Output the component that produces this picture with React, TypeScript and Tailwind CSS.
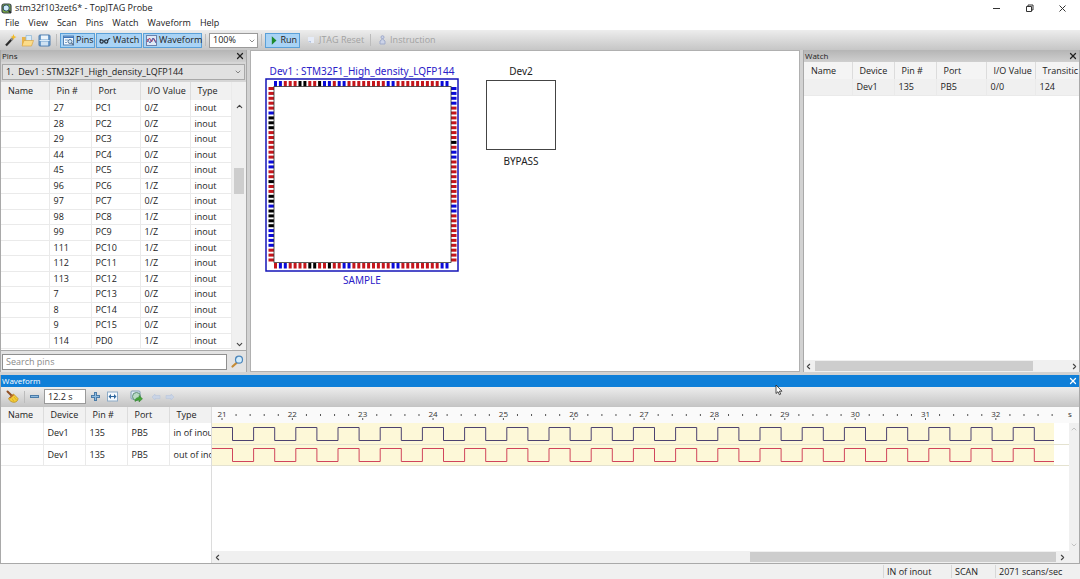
import React from 'react';
import { ChevronDown, ChevronLeft, ChevronRight, ChevronUp, X } from 'lucide-react';

interface Pin {
  pin: string;
  port: string;
  value: string;
}

const pins: Pin[] = [
  { pin: '27', port: 'PC1', value: '0/Z' },
  { pin: '28', port: 'PC2', value: '0/Z' },
  { pin: '29', port: 'PC3', value: '0/Z' },
  { pin: '44', port: 'PC4', value: '0/Z' },
  { pin: '45', port: 'PC5', value: '0/Z' },
  { pin: '96', port: 'PC6', value: '1/Z' },
  { pin: '97', port: 'PC7', value: '0/Z' },
  { pin: '98', port: 'PC8', value: '1/Z' },
  { pin: '99', port: 'PC9', value: '1/Z' },
  { pin: '111', port: 'PC10', value: '1/Z' },
  { pin: '112', port: 'PC11', value: '1/Z' },
  { pin: '113', port: 'PC12', value: '1/Z' },
  { pin: '7', port: 'PC13', value: '0/Z' },
  { pin: '8', port: 'PC14', value: '0/Z' },
  { pin: '9', port: 'PC15', value: '0/Z' },
  { pin: '114', port: 'PD0', value: '1/Z' },
];

// One letter per package pin: r = high, b = low, k = power or unused
const chipPins = {
  top: 'bbrrrkkrrkbbrbbrrrrrrrrbbrrrrrrrrrbb',
  right: 'bbbbrrrrrrrkrbbrrrrrrrrrbbrrrrrrrrrr',
  bottom: 'rbbrrrrkkrrkrrbbrrrrrrrrbbrrrrrrrrbb',
  left: 'rrrrrbkkkrrrrrrbbrrkrrkkbkkkkbbbbrrr',
};

const pinColors: Record<string, string> = { r: '#c4161c', b: '#0a0ad8', k: '#000000' };

function Separator() {
  return <span className="h-3 w-px shrink-0 bg-[#bcbcbc]" />;
}

function PanelTitle({ title, active = false }: { title: string; active?: boolean }) {
  return (
    <div
      className={`flex h-3 shrink-0 items-center justify-between px-px text-[8px] leading-3 ${
        active ? 'bg-[#0f7fd8] text-white' : 'bg-linear-to-b from-[#b5b5b5] to-[#cfcfcf] text-[#222]'
      }`}
    >
      <h2>{title}</h2>
      <button aria-label={`Close ${title}`}>
        <X size={10} strokeWidth={3} />
      </button>
    </div>
  );
}

function HeaderCell({ children }: { children?: React.ReactNode }) {
  return <th className="overflow-hidden border-r border-[#dcdcdc] pl-[7px] text-left font-normal last:border-r-0">{children}</th>;
}

function Cell({ children }: { children?: React.ReactNode }) {
  return <td className="overflow-hidden border-r border-b border-[#eaeaea] pl-1 last:border-r-0">{children}</td>;
}

function AppIcon() {
  return (
    <svg width="11" height="11" viewBox="0 0 11 11">
      <rect x="1" y="1" width="9" height="9" rx="2" fill="#7fae3c" stroke="#3b444c" strokeWidth="1.2" />
      <circle cx="5.2" cy="5" r="3.1" fill="#cfeafa" stroke="#2d4f66" />
      <path d="M7.5 7.5l2.5 2.5" stroke="#20262c" strokeWidth="1.6" />
    </svg>
  );
}

function WandIcon() {
  return (
    <svg width="13" height="13" viewBox="0 0 13 13">
      <path d="M2 11.5L8 5" stroke="#2b2b2b" strokeWidth="2.2" />
      <path d="M7 6l2.5-2.5" stroke="#8d8d8d" strokeWidth="2.2" />
      <path d="M9.5 0l.8 2.2 2.2.8-2.2.9-.8 2.1-.9-2.1L6.5 3l2.1-.8z" fill="#f2bb27" />
    </svg>
  );
}

function FolderIcon() {
  return (
    <svg width="13" height="13" viewBox="0 0 13 13">
      <path d="M1 3h4l1 1.5h4V11H1z" fill="#e9b44b" />
      <path d="M5 1.5h5.5V7H5z" fill="#d9ebf8" stroke="#8db5d3" strokeWidth=".7" />
      <path d="M3 6.5h9.5L10.5 12H1z" fill="#fbdc8a" stroke="#d79d35" strokeWidth=".6" />
    </svg>
  );
}

function SaveIcon() {
  return (
    <svg width="13" height="13" viewBox="0 0 13 13">
      <rect x="1" y="1" width="11" height="11" rx="1" fill="#6f9ecd" stroke="#4f7cae" />
      <rect x="3" y="1.5" width="7" height="4" fill="#eef5fb" />
      <rect x="3" y="7.5" width="7" height="4" fill="#cfe1f1" />
      <path d="M1.5 6.5h10" stroke="#dcebf8" />
    </svg>
  );
}

function PinsIcon() {
  return (
    <svg width="11" height="11" viewBox="0 0 11 11" className="shrink-0">
      <rect x=".5" y="1" width="10" height="9" fill="#f4f9fe" stroke="#5581b4" />
      <path d="M.5 2.2h10" stroke="#3d76bb" strokeWidth="1.6" />
      <path d="M2 5h3M2 7.5h2" stroke="#7fa3c9" />
      <circle cx="7" cy="6.5" r="2" fill="#cfe6f8" stroke="#5a7897" />
      <path d="M8.5 8l2 2" stroke="#596f87" strokeWidth="1.3" />
    </svg>
  );
}

function GlassesIcon() {
  return (
    <svg width="12" height="9" viewBox="0 0 12 9" fill="none" stroke="#25303c" strokeWidth="1.2" className="shrink-0">
      <circle cx="2.6" cy="5.5" r="1.6" />
      <circle cx="7.2" cy="5.5" r="1.6" />
      <path d="M4.200 5h1.400M8.800 4.500L10 2.500h1.200M1 4.300L2 3" />
    </svg>
  );
}

function WaveIcon() {
  return (
    <svg width="11" height="11" viewBox="0 0 11 11" fill="none" className="shrink-0">
      <rect x=".5" y=".5" width="10" height="10" fill="#dfeaf7" stroke="#6c82ad" />
      <path d="M1 7l2.5-4 2 4 2-4L10 7" stroke="#c0395b" />
      <path d="M1 4l3 4 3-5 3 5" stroke="#5069ad" />
    </svg>
  );
}

function SearchIcon() {
  return (
    <svg width="13" height="13" viewBox="0 0 13 13">
      <path d="M1.5 11.5L6 7.5" stroke="#c58b35" strokeWidth="2.2" strokeLinecap="round" />
      <circle cx="8" cy="4.7" r="3.5" fill="#d3ecfb" stroke="#4c86bb" strokeWidth="1.2" />
    </svg>
  );
}

function BroomIcon() {
  return (
    <svg width="13" height="13" viewBox="0 0 13 13">
      <path d="M1.5 1.5L5.5 5.500" stroke="#8f4f23" strokeWidth="2" strokeLinecap="round" />
      <path d="M2.5 8.500L7.500 4 12 8.500c0 2-1.500 3.500-3.500 3.800C6 12.500 3.500 11 2.500 8.500z" fill="#f3cd38" stroke="#b98a12" strokeWidth=".7" />
      <path d="M3.500 8.200L7.500 4.700" stroke="#b5622c" strokeWidth="1.2" />
      <path d="M6 8.500l2 3M8 7l2.500 3" stroke="#d2a21c" strokeWidth=".7" />
    </svg>
  );
}

function FitIcon() {
  return (
    <svg width="11" height="11" viewBox="0 0 11 11">
      <rect x=".5" y="1" width="10" height="9" fill="#f5f9fd" stroke="#8dabc7" />
      <path d="M1.5 5.5L4 3v5zM9.5 5.5L7 3v5z" fill="#2d659d" />
      <path d="M3 5.5h5" stroke="#2d659d" />
    </svg>
  );
}

function ExportIcon() {
  return (
    <svg width="13" height="13" viewBox="0 0 13 13">
      <rect x="1" y="1" width="9" height="8" rx="1" fill="#dce9f3" stroke="#7e9bb3" />
      <circle cx="6.5" cy="6.500" r="4" fill="#b8d9c5" stroke="#5e8d78" />
      <path d="M5 11.500c0-3 1.500-4 4-4V5.500l3.500 3.300L9 12v-2c-1.500 0-2.500.3-4 1.500z" fill="#44a537" stroke="#2e7d2b" strokeWidth=".5" />
    </svg>
  );
}

function StepIcon({ flip = false }: { flip?: boolean }) {
  return (
    <svg width="10" height="8" viewBox="0 0 10 8" className={flip ? '-scale-x-100' : ''}>
      <path d="M1 4l3-3v1.5h5v3H4V7z" fill="#c9d4e6" stroke="#b9c6dc" strokeWidth=".6" />
    </svg>
  );
}

function ZoomGlyph({ plus = false }: { plus?: boolean }) {
  return (
    <svg width="9" height="9" viewBox="0 0 9 9">
      <path d={plus ? 'M3 0h3v3h3v3H6v3H3V6H0V3h3z' : 'M0 3h9v3H0z'} fill="#4a7ba8" />
      <path d={plus ? 'M4 1h1v3h3v1H5v3H4V5H1V4h3z' : 'M1 4h7v1H1z'} fill="#8ebbe0" />
    </svg>
  );
}

function MenuBar() {
  const items = ['File', 'View', 'Scan', 'Pins', 'Watch', 'Waveform', 'Help'];
  return (
    <nav className="flex h-[14px] items-center gap-[9px] bg-white pl-[5px] text-[9px]">
      {items.map((item) => (
        <button key={item}>{item}</button>
      ))}
    </nav>
  );
}

function Toolbar() {
  const toggle = 'flex h-[15px] items-center gap-0.5 border border-[#5aa0d8] bg-[#a9d3f5] px-0.5';
  return (
    <div className="flex h-5 shrink-0 items-center bg-linear-to-b from-[#ededed] to-[#c6c6c6] pl-1 text-[9px]">
      <div className="flex items-center gap-1 pr-[5px]">
        <button aria-label="New project"><WandIcon /></button>
        <button aria-label="Open"><FolderIcon /></button>
        <button aria-label="Save"><SaveIcon /></button>
      </div>
      <Separator />
      <div className="flex gap-px px-[3px]">
        <button className={`${toggle} w-[35px]`}><PinsIcon />Pins</button>
        <button className={`${toggle} w-[46px]`}><GlassesIcon />Watch</button>
        <button className={`${toggle} w-[59px]`}><WaveIcon />Waveform</button>
      </div>
      <Separator />
      <div className="relative mx-[3px] flex">
        <select aria-label="Zoom" className="h-[15px] w-[49px] appearance-none border border-[#9a9a9a] bg-white pl-[3px] leading-[12px]">
          <option>100%</option>
        </select>
        <ChevronDown size={8} className="pointer-events-none absolute right-0.5 top-1 text-[#555]" />
      </div>
      <Separator />
      <button className={`${toggle} mx-[3px] w-[35px]`}>
        <svg width="11" height="9" viewBox="0 0 11 9"><path d="M4 0l5 4.500L4 9z" fill="#1d8a2d" /></svg>
        Run
      </button>
      <button disabled className="flex items-center gap-1 pl-1 pr-1.5 text-[#a2a2a2]">
        <svg width="8" height="8" viewBox="0 0 8 8"><path d="M1 1h6v6H3L1 5z" fill="#e6ecf8" /><path d="M1 5h3v2" fill="#b4c3df" /></svg>
        JTAG Reset
      </button>
      <Separator />
      <button disabled className="flex items-center gap-1 pl-2 text-[#a2a2a2]">
        <svg width="7" height="10" viewBox="0 0 7 10" fill="#ccd3e8" stroke="#a0abcb"><circle cx="3.500" cy="2.200" r="1.500" /><path d="M1 9V6l2.500-2L6 6v3z" /></svg>
        Instruction
      </button>
    </div>
  );
}

function PinsPanel() {
  return (
    <section className="flex w-[247px] shrink-0 flex-col border-x border-[#a9a9a9] bg-[#d6d6d6]">
      <PanelTitle title="Pins" />
      <div className="relative flex px-px py-0.5">
        <select aria-label="Device" className="h-4 w-full appearance-none border border-[#a8a8a8] bg-[#e1e1e1] pl-[3px] text-[9px]">
          <option>1.&nbsp;&nbsp;Dev1 : STM32F1_High_density_LQFP144</option>
        </select>
        <ChevronDown size={8} className="pointer-events-none absolute right-1 top-[6px] text-[#555]" />
      </div>
      <div className="flex h-[268px] overflow-hidden bg-white">
        <table className="w-[231px] table-fixed self-start whitespace-nowrap border-r border-[#eaeaea] text-[9px] leading-[14px]">
          <colgroup>
            <col className="w-[48px]" />
            <col className="w-[42px]" />
            <col className="w-[49px]" />
            <col className="w-[50px]" />
            <col />
          </colgroup>
          <thead className="bg-[#f1f1f1]">
            <tr className="h-[18px]">
              <HeaderCell>Name</HeaderCell>
              <HeaderCell>Pin #</HeaderCell>
              <HeaderCell>Port</HeaderCell>
              <HeaderCell>I/O Value</HeaderCell>
              <HeaderCell>Type</HeaderCell>
            </tr>
          </thead>
          <tbody>
            {pins.map((row) => (
              <tr key={row.pin} className="odd:h-4 even:h-[15px]">
                <Cell />
                <Cell>{row.pin}</Cell>
                <Cell>{row.port}</Cell>
                <Cell>{row.value}</Cell>
                <Cell>inout</Cell>
              </tr>
            ))}
          </tbody>
        </table>
        <div className="flex flex-1 flex-col items-center bg-[#f0f0f0] pt-5 text-[#444]">
          <ChevronUp size={9} strokeWidth={3} />
          <span className="mt-[57px] h-[26px] w-[10px] bg-[#cdcdcd]" />
          <ChevronDown size={9} strokeWidth={3} className="mt-auto mb-px" />
        </div>
      </div>
      <div className="flex flex-1 items-center gap-1 border-t border-[#a9a9a9] bg-[#e3e3e3] px-px">
        <input
          aria-label="Search pins"
          placeholder="Search pins"
          className="h-4 w-[225px] border border-[#8f8f8f] bg-white pl-[3px] text-[9px] placeholder:text-[#8a8a8a]"
        />
        <button aria-label="Search"><SearchIcon /></button>
      </div>
    </section>
  );
}

function ChipDrawing() {
  const pitch = 4.9;
  return (
    <svg width="194" height="194" viewBox="0 0 194 194">
      <rect x="1" y="1" width="192" height="192" fill="#fff" stroke="#1414b8" strokeWidth="1.5" />
      {chipPins.top.split('').map((c, i) => (
        <rect key={i} x={9 + i * pitch} y="3" width="3" height="5.5" fill={pinColors[c]} />
      ))}
      {chipPins.bottom.split('').map((c, i) => (
        <rect key={i} x={9 + i * pitch} y="185" width="3" height="5.5" fill={pinColors[c]} />
      ))}
      {chipPins.left.split('').map((c, i) => (
        <rect key={i} x="3.5" y={9 + i * pitch} width="5.5" height="3" fill={pinColors[c]} />
      ))}
      {chipPins.right.split('').map((c, i) => (
        <rect key={i} x="186" y={9 + i * pitch} width="5.5" height="3" fill={pinColors[c]} />
      ))}
      <rect x="9" y="8.5" width="177" height="176" fill="none" stroke="#333" strokeWidth=".8" />
    </svg>
  );
}

function ChainView() {
  return (
    <main className="flex min-w-0 flex-1 items-start gap-[27px] border border-[#b0b0b0] bg-white pl-[14px] pt-3 font-['Noto_Sans',sans-serif] text-[10px] leading-4">
      <figure className="flex flex-col items-center whitespace-nowrap text-[#2a20c8]">
        <figcaption className="h-[15px]">Dev1 : STM32F1_High_density_LQFP144</figcaption>
        <ChipDrawing />
        <p>SAMPLE</p>
      </figure>
      <figure className="flex flex-col items-center text-[#222]">
        <figcaption>Dev2</figcaption>
        <div className="mt-px h-[70px] w-[70px] border border-[#444]" />
        <p className="mt-[3px]">BYPASS</p>
      </figure>
    </main>
  );
}

function WatchPanel() {
  return (
    <section className="flex w-[277px] shrink-0 flex-col border-x border-[#a9a9a9] bg-white">
      <PanelTitle title="Watch" />
      <div className="flex-1 overflow-hidden">
        <table className="w-full table-fixed whitespace-nowrap text-[9px] leading-[14px]">
          <colgroup>
            <col className="w-[48px]" />
            <col className="w-[42px]" />
            <col className="w-[42px]" />
            <col className="w-[50px]" />
            <col className="w-[49px]" />
            <col />
          </colgroup>
          <thead className="bg-[#f4f4f4]">
            <tr className="h-[17px]">
              <HeaderCell>Name</HeaderCell>
              <HeaderCell>Device</HeaderCell>
              <HeaderCell>Pin #</HeaderCell>
              <HeaderCell>Port</HeaderCell>
              <HeaderCell>I/O Value</HeaderCell>
              <HeaderCell>Transitic</HeaderCell>
            </tr>
          </thead>
          <tbody>
            <tr className="h-4 bg-[#f0f0f0]">
              <Cell />
              <Cell>Dev1</Cell>
              <Cell>135</Cell>
              <Cell>PB5</Cell>
              <Cell>0/0</Cell>
              <Cell>124</Cell>
            </tr>
          </tbody>
        </table>
      </div>
      <div className="flex h-3 items-center bg-[#f0f0f0] text-[#444]">
        <ChevronLeft size={9} strokeWidth={3} />
        <span className="ml-0.5 h-[10px] w-[218px] bg-[#cdcdcd]" />
        <ChevronRight size={9} strokeWidth={3} className="ml-auto" />
      </div>
    </section>
  );
}

const signals = [
  { type: 'in of inout', color: '#4c4270' },
  { type: 'out of inout', color: '#d0455c' },
];

// Square wave with a 42.2px period that starts high and drops after 20.5px
function wavePath(top: number) {
  let d = `M0 ${top}`;
  for (let i = 0; i < 20; i++) {
    const fall = 20.5 + i * 42.2;
    d += `H${fall}V${top + 13}`;
    if (i < 19) d += `H${fall + 21.1}V${top}`;
  }
  return d + 'H842';
}

function TimeRuler() {
  const ticks = Array.from({ length: 60 }, (_, i) => i);
  return (
    <svg width="868" height="16" viewBox="0 0 868 16" className="shrink-0 bg-[#fafafa]">
      {ticks.map((i) =>
        i % 5 === 0 ? (
          <g key={i}>
            <text x={10 + i * 14.07} y="10" textAnchor="middle" fontSize="8" fill="#333">{21 + i / 5}</text>
            <rect x={9.5 + i * 14.07} y="11" width="1" height="2" fill="#555" />
          </g>
        ) : (
          <rect key={i} x={9.5 + i * 14.07} y="7" width="1" height="2" fill="#555" />
        ),
      )}
      <text x="856" y="10" fontSize="8" fill="#333">s</text>
    </svg>
  );
}

function WaveChart() {
  return (
    <svg width="858" height="43" viewBox="0 0 858 43">
      <rect width="842" height="42" fill="#fdf8d8" />
      <path d="M0 21.5H858M0 42.5H858" stroke="#e4e2d0" />
      {signals.map((signal, i) => (
        <path key={signal.type} d={wavePath(4.5 + i * 21)} fill="none" stroke={signal.color} />
      ))}
    </svg>
  );
}

function WaveformPanel() {
  return (
    <section className="relative flex flex-1 flex-col border-x border-b border-[#a9a9a9] bg-white">
      <PanelTitle title="Waveform" active />
      <div className="flex h-5 shrink-0 items-center border-b border-[#c4c4c4] bg-linear-to-b from-[#ededed] to-[#c6c6c6] pl-[5px] text-[9px]">
        <button aria-label="Clear" className="mr-[5px]"><BroomIcon /></button>
        <Separator />
        <button aria-label="Zoom out" className="mx-[5px]"><ZoomGlyph /></button>
        <input aria-label="Time span" defaultValue="12.2 s" className="h-[15px] w-[42px] border border-[#9a9a9a] bg-white pl-[3px]" />
        <button aria-label="Zoom in" className="mx-[5px]"><ZoomGlyph plus /></button>
        <button aria-label="Fit" className="mx-0.5"><FitIcon /></button>
        <span className="mx-1"><Separator /></span>
        <button aria-label="Export" className="ml-0.5 mr-2"><ExportIcon /></button>
        <button aria-label="Previous edge" disabled className="mr-1"><StepIcon /></button>
        <button aria-label="Next edge" disabled><StepIcon flip /></button>
      </div>
      <div className="flex min-h-0 flex-1">
        <div className="w-[211px] shrink-0 overflow-hidden border-r border-[#dcdcdc]">
          <table className="w-full table-fixed whitespace-nowrap text-[9px] leading-[14px]">
            <colgroup>
              <col className="w-[42px]" />
              <col className="w-[42px]" />
              <col className="w-[42px]" />
              <col className="w-[42px]" />
              <col />
            </colgroup>
            <thead className="bg-[#f1f1f1]">
              <tr className="h-4">
                <HeaderCell>Name</HeaderCell>
                <HeaderCell>Device</HeaderCell>
                <HeaderCell>Pin #</HeaderCell>
                <HeaderCell>Port</HeaderCell>
                <HeaderCell>Type</HeaderCell>
              </tr>
            </thead>
            <tbody>
              {signals.map((signal) => (
                <tr key={signal.type} className="h-[21px]">
                  <Cell />
                  <Cell>Dev1</Cell>
                  <Cell>135</Cell>
                  <Cell>PB5</Cell>
                  <Cell>{signal.type}</Cell>
                </tr>
              ))}
            </tbody>
          </table>
        </div>
        <div className="flex min-w-0 flex-1 flex-col overflow-hidden">
          <TimeRuler />
          <div className="flex min-h-0 flex-1">
            <div className="min-w-0 flex-1 overflow-hidden">
              <WaveChart />
            </div>
            <div className="flex w-[10px] flex-col items-center justify-between bg-[#f0f0f0] py-0.5 text-[#aaa]">
              <ChevronUp size={8} />
              <ChevronDown size={8} />
            </div>
          </div>
          <div className="flex h-3 items-center bg-[#f0f0f0] pl-px pr-3 text-[#444]">
            <ChevronLeft size={9} strokeWidth={3} />
            <span className="ml-auto h-[10px] w-[306px] bg-[#cdcdcd]" />
            <ChevronRight size={9} strokeWidth={3} className="ml-0.5" />
          </div>
        </div>
      </div>
      {/* Mouse pointer */}
      <svg width="8" height="12" viewBox="0 0 8 12" className="absolute left-[774px] top-[9px]">
        <path d="M1 1v8.500l2-1.800 1.300 3 1.400-.6-1.300-2.900H7z" fill="#fff" stroke="#222" strokeWidth=".8" />
      </svg>
    </section>
  );
}

export default function App() {
  return (
    <div className="flex h-screen flex-col overflow-hidden bg-[#d2d2d2] font-['Open_Sans','Noto_Sans',sans-serif] text-[#222]">
      <header className="flex h-4 shrink-0 items-center justify-between bg-white pl-px pr-[13px]">
        <h1 className="flex items-center gap-[3px] text-[9px]">
          <AppIcon />
          stm32f103zet6* - TopJTAG Probe
        </h1>
        <div className="flex items-center gap-6 text-[#333]">
          <button aria-label="Minimize">
            <svg width="9" height="9" viewBox="0 0 9 9"><path d="M1 4.500h7" stroke="currentColor" /></svg>
          </button>
          <button aria-label="Restore">
            <svg width="9" height="9" viewBox="0 0 9 9" fill="none" stroke="currentColor"><path d="M1.500 2.500h5v5h-5zM3 2.500V1h5v5H6.500" /></svg>
          </button>
          <button aria-label="Close">
            <svg width="9" height="9" viewBox="0 0 9 9"><path d="M1.500 1.500l6 6M7.500 1.500l-6 6" stroke="currentColor" /></svg>
          </button>
        </div>
      </header>
      <MenuBar />
      <Toolbar />
      <div className="flex h-[322px] shrink-0 gap-[3px]">
        <PinsPanel />
        <ChainView />
        <WatchPanel />
      </div>
      <div className="h-[3px] shrink-0" />
      <WaveformPanel />
      <footer className="flex h-[15px] shrink-0 items-center justify-end bg-[#f0f0f0] text-[9px]">
        <span className="w-[68px] border-l border-[#d8d8d8] pl-[3px]">IN of inout</span>
        <span className="w-[44px] border-l border-[#d8d8d8] pl-[3px]">SCAN</span>
        <span className="w-[85px] border-l border-[#d8d8d8] pl-[3px]">2071 scans/sec</span>
      </footer>
    </div>
  );
}
